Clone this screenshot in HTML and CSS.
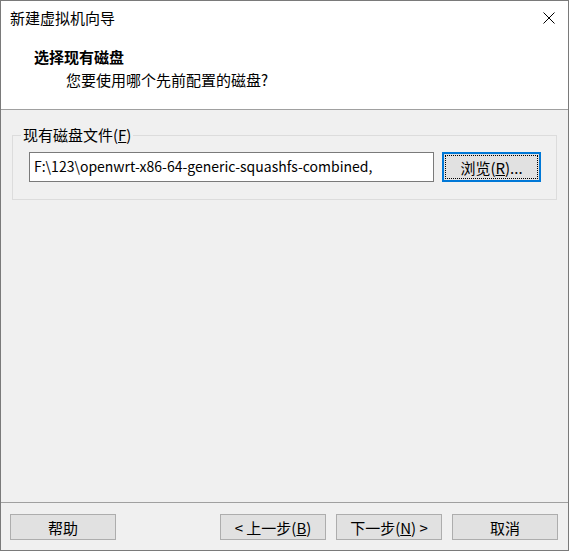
FILE: index.html
```html
<!DOCTYPE html>
<html lang="zh-CN">
<head>
    <meta charset="UTF-8">
    <title>新建虚拟机向导</title>
    <link rel="stylesheet" href="styles.css">
</head>
<body>
<div class="window">
    <div class="header">
        <div class="title-bar">
            <span class="title">新建虚拟机向导</span>
            <svg class="close" width="12" height="12" viewBox="0 0 12 12">
                <path d="M0.5 0.5 L11.5 11.5 M11.5 0.5 L0.5 11.5" stroke="#000" stroke-width="1" fill="none"/>
            </svg>
        </div>
        <div class="heading">选择现有磁盘</div>
        <div class="subheading">您要使用哪个先前配置的磁盘?</div>
    </div>

    <div class="content">
        <fieldset class="group">
            <legend>现有磁盘文件(<u>F</u>)</legend>
            <div class="file-row">
                <input type="text" class="file-input" value="F:\123\openwrt-x86-64-generic-squashfs-combined,">
                <button type="button" class="btn btn-focus"><span class="focus-ring">浏览(<u>R</u>)...</span></button>
            </div>
        </fieldset>
    </div>

    <div class="footer">
        <button type="button" class="btn">帮助</button>
        <div class="nav">
            <button type="button" class="btn">&lt; 上一步(<u>B</u>)</button>
            <button type="button" class="btn">下一步(<u>N</u>) &gt;</button>
            <button type="button" class="btn">取消</button>
        </div>
    </div>
</div>
</body>
</html>
```

FILE: styles.css
```css
html, body {
    margin: 0;
    padding: 0;
    background: #fff;
}

body {
    font-family: "Noto Sans CJK SC", sans-serif;
    font-size: 15px;
    color: #000;
}

.window {
    width: 569px;
    height: 551px;
    box-sizing: border-box;
    border: 1px solid #7a7a7a;
    display: flex;
    flex-direction: column;
    background: #f0f0f0;
}

/* white top part with title and page heading */
.header {
    height: 108px;
    background: #fff;
    border-bottom: 1px solid #a0a0a0;
}

.title-bar {
    height: 34px;
    display: flex;
    align-items: center;
    justify-content: space-between;
    padding: 0 13px 0 9px;
}

.title {
    line-height: 34px;
}

.heading {
    font-weight: bold;
    line-height: 20px;
    margin: 12px 0 0 33px;
}

.subheading {
    line-height: 20px;
    margin: 3px 0 0 65px;
}

.content {
    flex: 1;
    padding: 15px 11px 0 11px;
}

.group {
    margin: 0;
    padding: 7px 15px 17px 16px;
    border: 1px solid #dcdcdc;
}

.group legend {
    padding: 0 2px;
    margin-left: -8px;
    line-height: 20px;
}

.file-row {
    display: flex;
    gap: 8px;
}

.file-input {
    width: 405px;
    height: 30px;
    box-sizing: border-box;
    border: 1px solid #7a7a7a;
    padding: 0 4px 2px 4px;
    font-family: "Noto Sans CJK SC", sans-serif;
    font-size: 14px;
    color: #000;
    background: #fff;
    outline: none;
}

.btn {
    width: 106px;
    height: 26px;
    box-sizing: border-box;
    background: #e1e1e1;
    border: 1px solid #adadad;
    padding: 0;
    font-family: "Noto Sans CJK SC", sans-serif;
    font-size: 15px;
    color: #000;
}

.btn-focus {
    width: 99px;
    height: 30px;
    border: 2px solid #0078d7;
    padding: 1px;
}

.focus-ring {
    display: flex;
    align-items: center;
    justify-content: center;
    height: 100%;
    box-sizing: border-box;
    border: 1px dotted #000;
}

.footer {
    border-top: 1px solid #a0a0a0;
    padding: 11px 10px 10px 9px;
    display: flex;
    justify-content: space-between;
}

.nav {
    display: flex;
    gap: 10px;
}
```
